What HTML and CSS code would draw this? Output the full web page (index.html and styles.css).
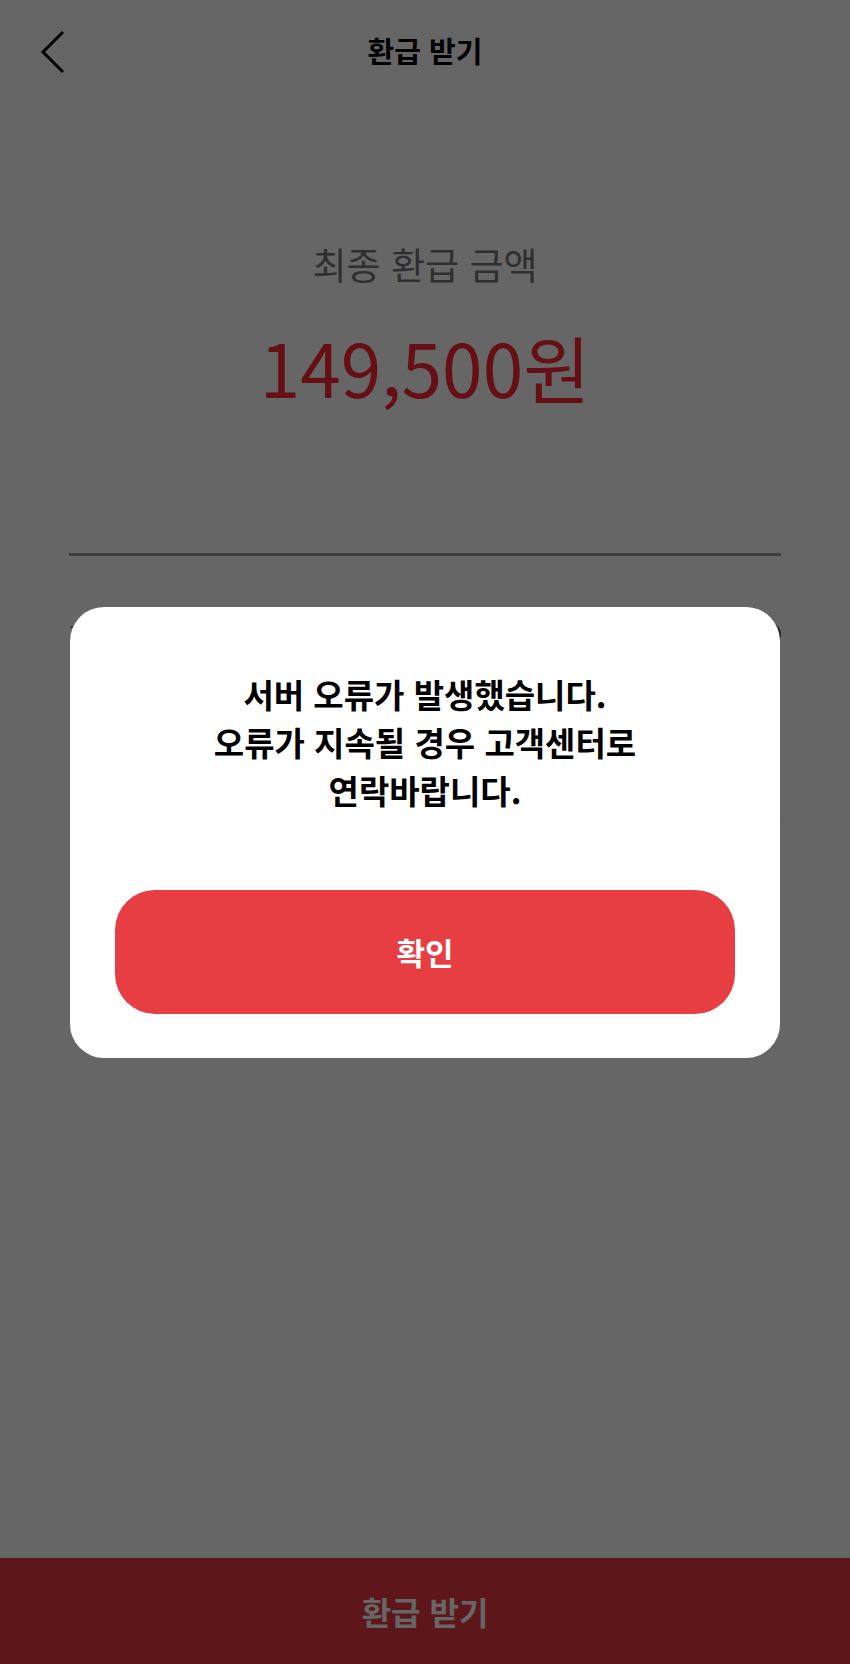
FILE: index.html
```html
<!DOCTYPE html>
<html lang="ko">

<head>
  <meta charset="UTF-8">
  <meta name="viewport" content="width=device-width, initial-scale=1.0">
  <title>환급 받기</title>
  <link rel="stylesheet" href="styles.css">
</head>

<body>
  <div id="page">
    <header class="topbar">
      <button type="button" class="back" aria-label="뒤로">
        <svg width="28" height="46" viewBox="0 0 28 46">
          <polyline points="24,3 4,23 24,43" fill="none" stroke="#000" stroke-width="3" />
        </svg>
      </button>
      <h1>환급 받기</h1>
    </header>

    <section class="summary">
      <p class="summary-label">최종 환급 금액</p>
      <p class="summary-amount">149,500원</p>
    </section>

    <!-- 모달 뒤에 가려지는 상세 내역 -->
    <ul class="detail-list">
      <li><span>환급 예정 금액</span><span class="help">?</span></li>
      <li><span>수수료</span><span>0원</span></li>
      <li><span>환급 계좌</span><span>-</span></li>
    </ul>

    <button type="button" class="submit">환급 받기</button>
  </div>

  <div class="dim">
    <div class="dialog">
      <p class="dialog-msg">서버 오류가 발생했습니다.<br>오류가 지속될 경우 고객센터로<br>연락바랍니다.</p>
      <button type="button" class="dialog-ok">확인</button>
    </div>
  </div>
</body>

</html>
```

FILE: styles.css
```css
body {
  margin: 0;
  background: #fff;
  font-family: "Noto Sans CJK KR", "Noto Sans", sans-serif;
}

#page {
  width: 850px;
  min-height: 1664px;
  display: flex;
  flex-direction: column;
}

.topbar {
  height: 100px;
  display: flex;
  align-items: center;
  justify-content: center;
  position: relative;
}

.topbar h1 {
  margin: 0;
  font-size: 29px;
  font-weight: 700;
  color: #000;
}

.back {
  position: absolute;
  left: 39px;
  top: 29px;
  padding: 0;
  border: none;
  background: none;
}

.back svg {
  display: block;
}

.summary {
  text-align: center;
  padding-top: 139px;
}

.summary-label {
  margin: 0;
  font-size: 37px;
  line-height: 50px;
  color: #777;
}

.summary-amount {
  margin: 33px 0 0;
  font-size: 73px;
  line-height: 88px;
  font-weight: 400;
  color: #ff2a35;
}

.detail-list {
  list-style: none;
  margin: 143px 69px 0 69px;
  padding: 0;
  border-top: 3px solid #999;
}

.detail-list li {
  display: flex;
  justify-content: space-between;
  align-items: center;
  height: 69px;
  border-bottom: 1px solid #e4e4e4;
  font-size: 26px;
  color: #555;
}

.detail-list li:first-child {
  height: 156px;
}

.help {
  width: 22px;
  height: 22px;
  border-radius: 50%;
  background: #555;
  color: #fff;
  font-size: 16px;
  text-align: center;
  line-height: 22px;
}

.submit {
  margin-top: auto;
  height: 106px;
  border: none;
  background: #e8393f;
  color: #fff;
  font-family: inherit;
  font-size: 32px;
  font-weight: 700;
}

.dim {
  position: fixed;
  inset: 0;
  background: rgba(0, 0, 0, 0.6);
  display: flex;
  align-items: center;
  justify-content: center;
}

.dialog {
  width: 710px;
  box-sizing: border-box;
  padding: 63px 45px 44px;
  background: #fff;
  border-radius: 34px;
  display: flex;
  flex-direction: column;
}

.dialog-msg {
  margin: 0;
  text-align: center;
  font-size: 33px;
  line-height: 48px;
  font-weight: 700;
  color: #000;
}

.dialog-ok {
  margin-top: 76px;
  height: 124px;
  border: none;
  border-radius: 40px;
  background: #e63e43;
  color: #fff;
  font-family: inherit;
  font-size: 31px;
  font-weight: 700;
}
```
